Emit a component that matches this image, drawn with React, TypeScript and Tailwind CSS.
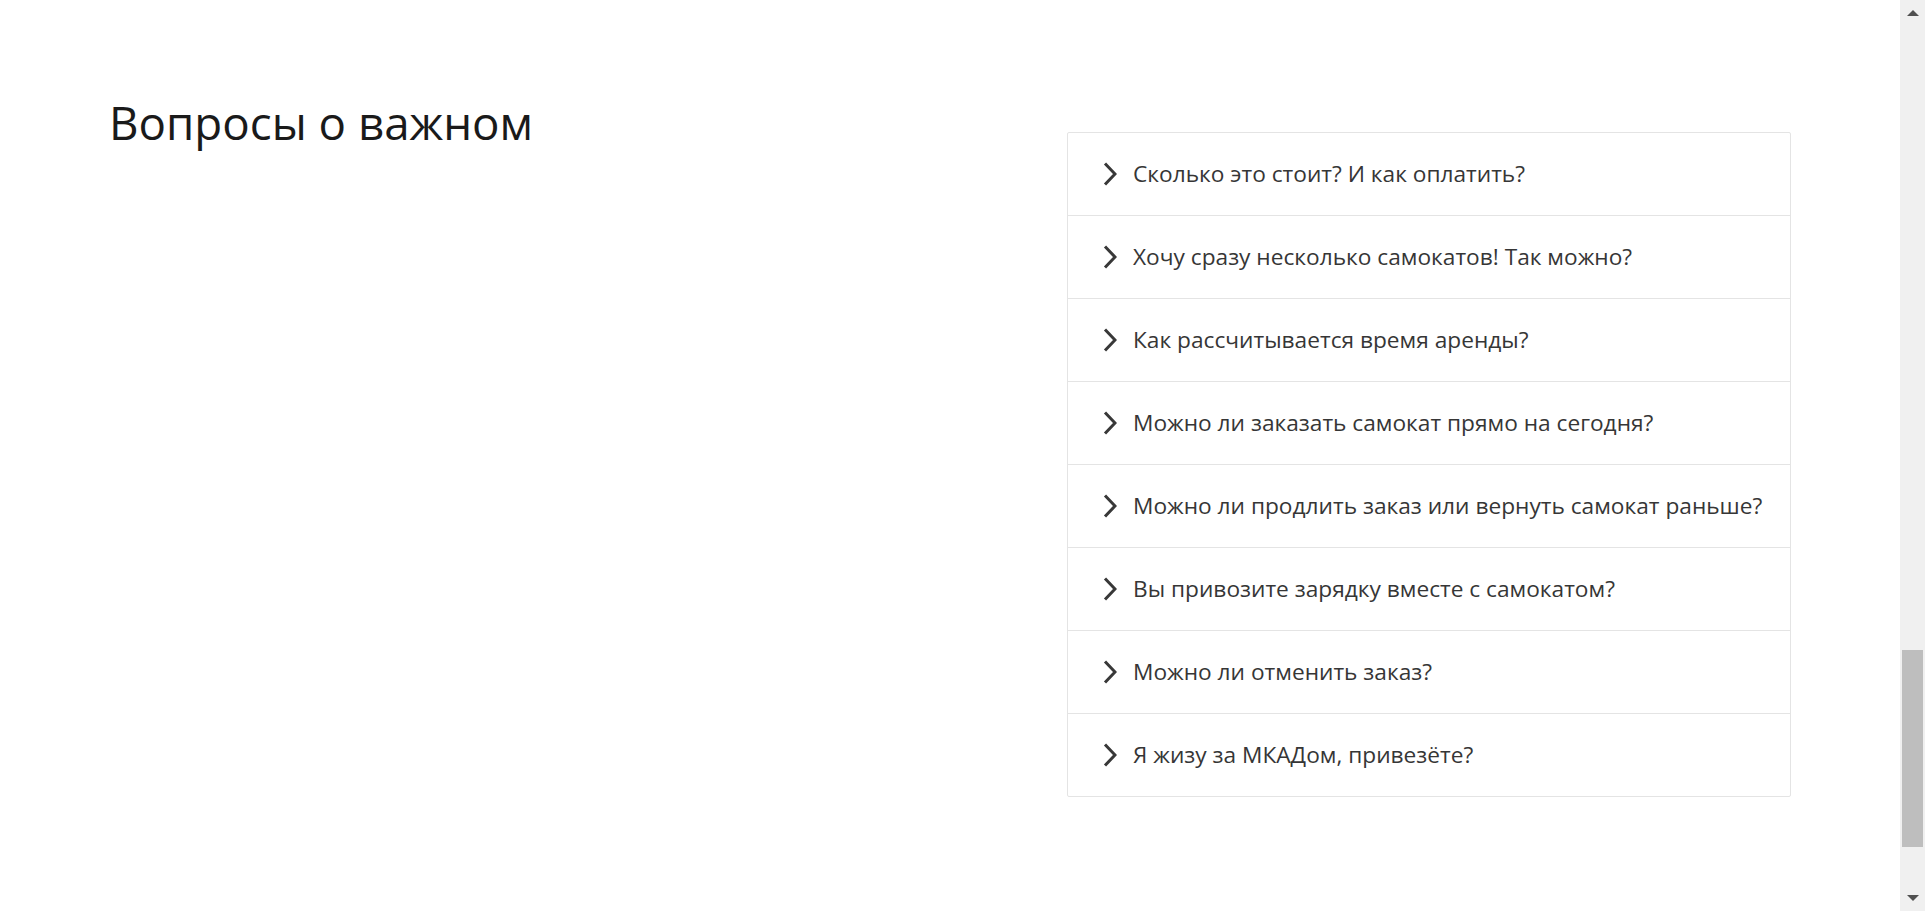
import React from "react";

const questions = [
  "Сколько это стоит? И как оплатить?",
  "Хочу сразу несколько самокатов! Так можно?",
  "Как рассчитывается время аренды?",
  "Можно ли заказать самокат прямо на сегодня?",
  "Можно ли продлить заказ или вернуть самокат раньше?",
  "Вы привозите зарядку вместе с самокатом?",
  "Можно ли отменить заказ?",
  "Я жизу за МКАДом, привезёте?",
];

function Chevron() {
  return (
    <svg width="14" height="24" viewBox="0 0 14 24" className="shrink-0">
      <path d="M2 1.5 L12 12 L2 22.5" fill="none" stroke="#383838" strokeWidth="3" strokeLinecap="butt" strokeLinejoin="miter" />
    </svg>
  );
}

export default function App() {
  return (
    <div className="flex h-[911px] w-full bg-white" style={{ fontFamily: '"Open Sans", "Noto Sans", sans-serif' }}>
      <div className="flex-1 flex justify-between pl-[109px] pr-[109px] pt-[92px]">
        <h2 className="text-[45.7px] leading-[60px] font-normal text-[#1a1a1a]">Вопросы о важном</h2>
        <div className="mt-[40px] w-[724px] self-start border border-[#e4e4e4] rounded-[2px]">
          {questions.map((q, i) => (
            <div
              key={i}
              className={`box-content flex items-center h-[82px] pl-[35px] gap-[16px] ${i > 0 ? "border-t border-[#e4e4e4]" : ""}`}
            >
              <Chevron />
              <span className="text-[22.7px] text-[#363636] leading-none">{q}</span>
            </div>
          ))}
        </div>
      </div>
      <div className="w-[25px] bg-[#f0f0f0] flex flex-col items-center">
        <div className="h-[10px]" />
        <div className="w-0 h-0 border-l-[6px] border-r-[6px] border-b-[6px] border-l-transparent border-r-transparent border-b-[#505050]" />
        <div className="flex-1 w-full flex flex-col pt-[634px] pb-[48px] px-[2px]">
          <div className="flex-1 bg-[#bebebe]" />
        </div>
        <div className="w-0 h-0 border-l-[6px] border-r-[6px] border-t-[6px] border-l-transparent border-r-transparent border-t-[#505050] mb-[10px]" />
      </div>
    </div>
  );
}
